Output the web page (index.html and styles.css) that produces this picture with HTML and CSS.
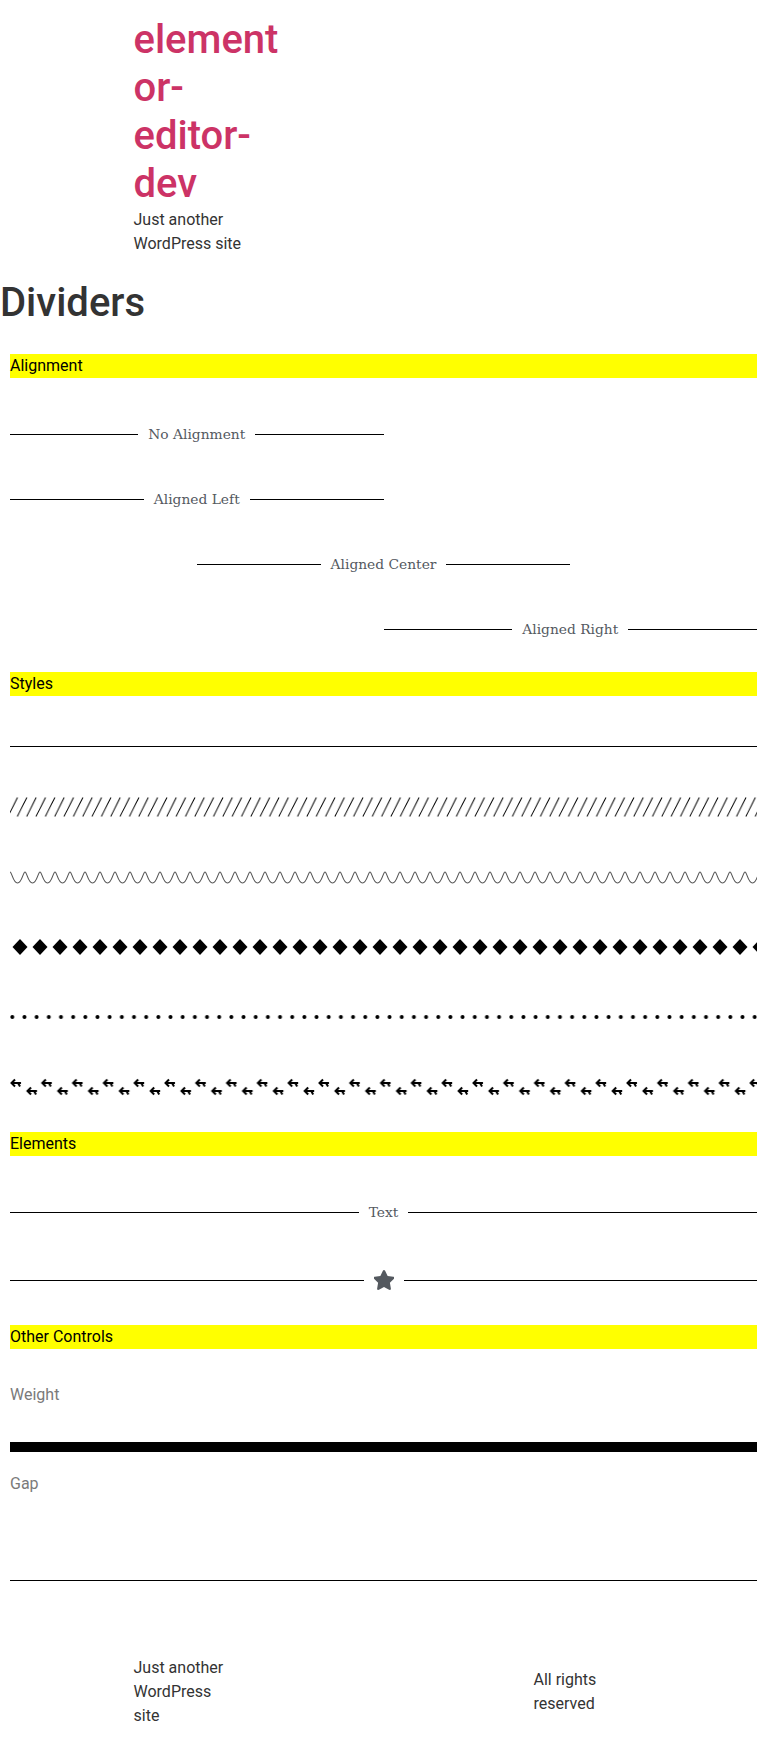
FILE: index.html
```html
<!DOCTYPE html>
<html lang="en">
<head>
<meta charset="utf-8">
<title>Dividers – elementor-editor-dev</title>
<link rel="stylesheet" href="styles.css">
</head>
<body>
<header class="site-header">
  <div class="branding">
    <h1 class="site-title">elementor-editor-dev</h1>
    <p class="tagline">Just another WordPress site</p>
  </div>
</header>

<main class="page">
  <h1 class="page-title">Dividers</h1>
  <div class="content">

    <h2 class="bar">Alignment</h2>
    <div class="divider half"><span class="line"></span><span class="dtext">No Alignment</span><span class="line"></span></div>
    <div class="divider half"><span class="line"></span><span class="dtext">Aligned Left</span><span class="line"></span></div>
    <div class="divider half center"><span class="line"></span><span class="dtext">Aligned Center</span><span class="line"></span></div>
    <div class="divider half right"><span class="line"></span><span class="dtext">Aligned Right</span><span class="line"></span></div>

    <h2 class="bar bar-styles">Styles</h2>
    <div class="solid"><span class="line"></span></div>
    <div class="pattern">
      <svg class="pat" width="100%" height="20">
        <defs><pattern id="p-slash" width="9.34" height="20" patternUnits="userSpaceOnUse">
          <path d="M-2 19.5 L7.5 0.5 M7.34 19.5 L16.84 0.5" stroke="#000" stroke-width="1" fill="none"/>
        </pattern></defs>
        <rect width="100%" height="20" fill="url(#p-slash)"/>
      </svg>
    </div>
    <div class="pattern">
      <svg class="pat" width="100%" height="20">
        <defs><pattern id="p-wave" width="15" height="20" patternUnits="userSpaceOnUse">
          <path d="M0 5 C2 5 3 16 7.5 16 C12 16 13 5 15 5" stroke="#555" stroke-width="1.1" fill="none"/>
        </pattern></defs>
        <rect width="100%" height="20" fill="url(#p-wave)"/>
      </svg>
    </div>
    <div class="pattern">
      <svg class="pat" width="100%" height="20">
        <defs><pattern id="p-diamond" width="20" height="20" patternUnits="userSpaceOnUse">
          <polygon points="10,2 17.5,10 10,18 2.5,10" fill="#000"/>
        </pattern></defs>
        <rect width="100%" height="20" fill="url(#p-diamond)"/>
      </svg>
    </div>
    <div class="pattern">
      <svg class="pat" width="100%" height="20">
        <defs><pattern id="p-dots" width="12.17" height="20" patternUnits="userSpaceOnUse">
          <circle cx="2.3" cy="10" r="2" fill="#000"/>
        </pattern></defs>
        <rect width="100%" height="20" fill="url(#p-dots)"/>
      </svg>
    </div>
    <div class="pattern">
      <svg class="pat" width="100%" height="20">
        <defs><pattern id="p-arrow" width="30.8" height="20" patternUnits="userSpaceOnUse">
          <g stroke="#000" stroke-width="2" fill="none" stroke-linecap="butt" stroke-linejoin="miter">
            <path d="M1.5 6 H11 M5 2.5 L1.5 6 L5 9.5 M8 6 L10 9.5"/>
            <path d="M17.5 14 H27 M21 10.5 L17.5 14 L21 17.5 M24 14 L26 17.5"/>
          </g>
        </pattern></defs>
        <rect width="100%" height="20" fill="url(#p-arrow)"/>
      </svg>
    </div>

    <h2 class="bar">Elements</h2>
    <div class="divider"><span class="line"></span><span class="dtext">Text</span><span class="line"></span></div>
    <div class="divider icon-div"><span class="line"></span>
      <span class="dicon"><svg width="20" height="20" viewBox="30 0 516 512"><path fill="#54595f" d="M259.3 17.8L194 150.2 47.9 171.5c-26.2 3.8-36.7 36.1-17.7 54.6l105.7 103-25 145.5c-4.5 26.3 23.2 46 46.4 33.7L288 439.6l130.7 68.7c23.2 12.2 50.9-7.4 46.4-33.7l-25-145.5 105.7-103c19-18.5 8.5-50.8-17.7-54.6L382 150.2 316.7 17.8c-11.7-23.6-45.6-23.9-57.4 0z"/></svg></span>
      <span class="line"></span></div>

    <h2 class="bar">Other Controls</h2>
    <p class="label label-weight">Weight</p>
    <div class="weight"><span class="thick"></span></div>
    <p class="label label-gap">Gap</p>
    <div class="gap"><span class="line"></span></div>
  </div>
</main>

<footer class="site-footer">
  <p class="foot-tagline">Just another WordPress site</p>
  <p class="copyright">All rights reserved</p>
</footer>
</body>
</html>
```
FILE: styles.css
```css
* { box-sizing: border-box; }
html, body { margin: 0; padding: 0; background: #fff; }
body {
  font-family: Roboto, "Liberation Sans", sans-serif;
  font-size: 16px;
  line-height: 24px;
  color: #333;
}
.site-header {
  width: 500px;
  margin: 0 auto;
  padding: 16px 0;
}
.branding { width: 150px; overflow-wrap: break-word; }
.site-title {
  margin: 0;
  font-size: 40px;
  line-height: 48px;
  font-weight: 500;
  color: #cc3366;
}
.tagline { margin: 0; }

.page-title {
  margin: 7px 0 0;
  font-size: 40px;
  line-height: 48px;
  font-weight: 500;
  color: #333;
}
.content { padding: 27px 10px 0; }

.bar {
  margin: 0 0 34px;
  background: #ffff00;
  color: #000;
  font-size: 16px;
  font-weight: 400;
  line-height: 24px;
}
.bar-styles { margin-bottom: 35px; }

.divider {
  display: flex;
  align-items: center;
  padding: 15px 0;
  margin-bottom: 20px;
}
.divider.half { width: 50%; }
.divider.center { margin-left: auto; margin-right: auto; }
.divider.right { margin-left: auto; }
.line { flex: 1; height: 0; border-top: 1px solid #000; display: block; }
.dtext {
  padding: 0 10px;
  font-family: "DejaVu Serif", serif;
  font-size: 13.8px;
  line-height: 15px;
  color: #54595f;
  white-space: nowrap;
}
.dicon { display: flex; padding: 0 10px; height: 20px; }
.dicon svg { display: block; }

.solid { padding: 15px 0; margin-bottom: 20px; display: flex; }
.pattern { padding: 15px 0; margin-bottom: 20px; }
.pat { display: block; }

.label { margin: 0; color: #7a7a7a; }
.label-weight { margin-bottom: 20px; }
.weight { padding-top: 15px; margin-bottom: 20px; }
.thick { display: block; height: 10px; background: #000; }
.label-gap { margin-bottom: 20px; }
.gap { padding: 64px 0 59px; display: flex; }

.site-footer {
  width: 500px;
  margin: 0 auto;
  padding: 16px 0;
  display: flex;
  justify-content: space-between;
  align-items: center;
}
.foot-tagline { margin: 0; width: 95px; }
.copyright { margin: 0; width: 100px; }
```
